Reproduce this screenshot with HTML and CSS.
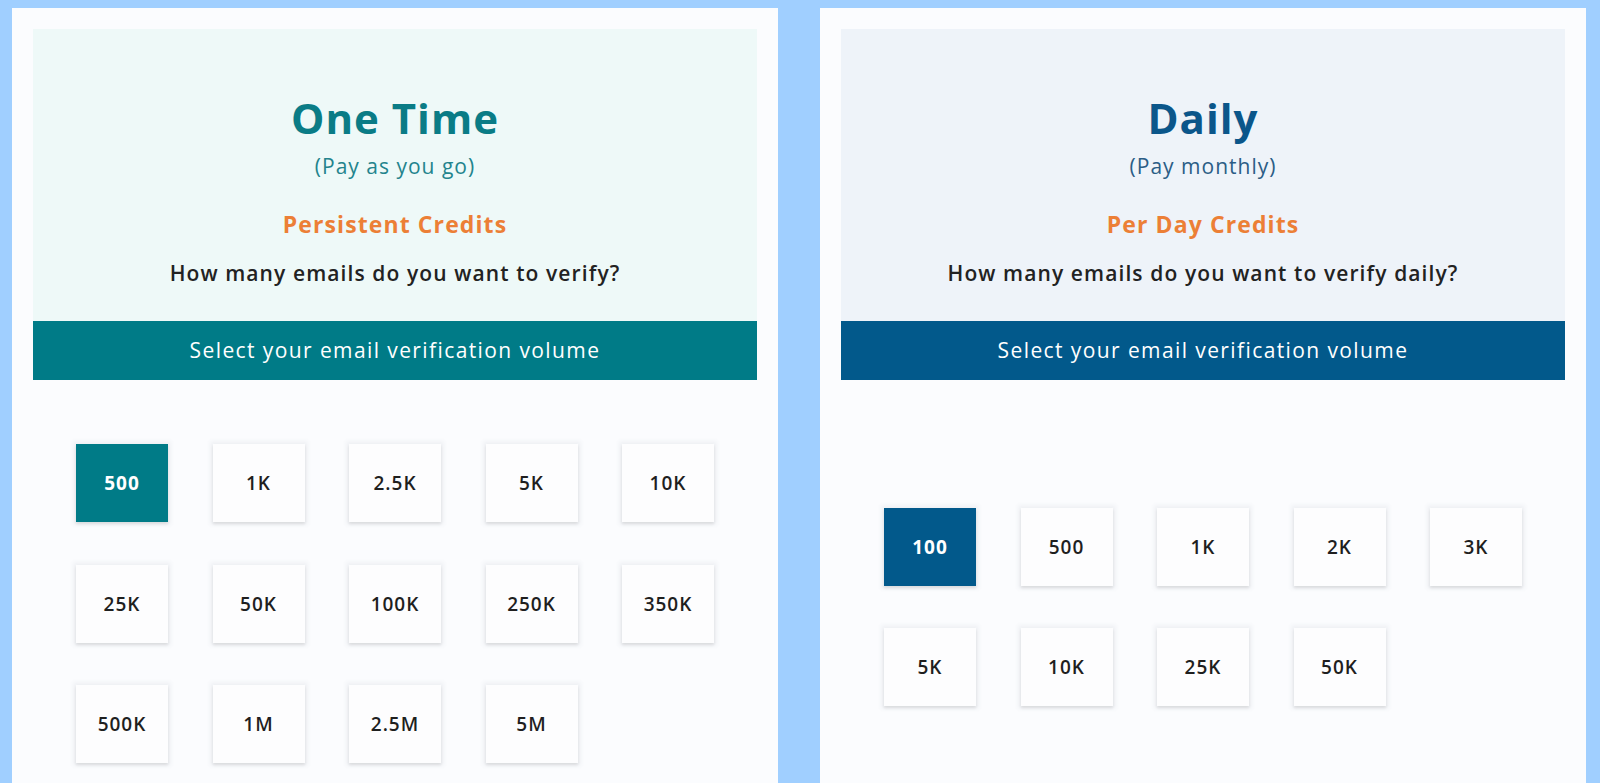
FILE: index.html
```html
<!DOCTYPE html>
<html lang="en">
<head>
<meta charset="utf-8">
<title>Email verification plans</title>
<link rel="stylesheet" href="styles.css">
</head>
<body>
<main class="plans">
  <section class="plan plan-onetime">
    <header class="plan-head">
      <h1 class="plan-title">One Time</h1>
      <p class="plan-sub">(Pay as you go)</p>
      <p class="plan-credits">Persistent Credits</p>
      <p class="plan-question">How many emails do you want to verify?</p>
    </header>
    <div class="plan-bar">Select your email verification volume</div>
    <div class="plan-body">
      <div class="vol-grid">
        <button class="vol is-active">500</button>
        <button class="vol">1K</button>
        <button class="vol">2.5K</button>
        <button class="vol">5K</button>
        <button class="vol">10K</button>
        <button class="vol">25K</button>
        <button class="vol">50K</button>
        <button class="vol">100K</button>
        <button class="vol">250K</button>
        <button class="vol">350K</button>
        <button class="vol">500K</button>
        <button class="vol">1M</button>
        <button class="vol">2.5M</button>
        <button class="vol">5M</button>
      </div>
    </div>
  </section>
  <section class="plan plan-daily">
    <header class="plan-head">
      <h1 class="plan-title">Daily</h1>
      <p class="plan-sub">(Pay monthly)</p>
      <p class="plan-credits">Per Day Credits</p>
      <p class="plan-question">How many emails do you want to verify daily?</p>
    </header>
    <div class="plan-bar">Select your email verification volume</div>
    <div class="plan-body">
      <div class="vol-grid">
        <button class="vol is-active">100</button>
        <button class="vol">500</button>
        <button class="vol">1K</button>
        <button class="vol">2K</button>
        <button class="vol">3K</button>
        <button class="vol">5K</button>
        <button class="vol">10K</button>
        <button class="vol">25K</button>
        <button class="vol">50K</button>
      </div>
    </div>
  </section>
</main>
</body>
</html>
```

FILE: styles.css
```css
* { box-sizing: border-box; }

html, body {
  margin: 0;
  padding: 0;
  height: 100%;
  overflow: hidden;
}

body {
  background: #a0cfff;
  font-family: "Open Sans", "Liberation Sans", sans-serif;
  color: #1f1f1f;
}

.plans {
  display: flex;
  align-items: stretch;
  gap: 42px;
  padding: 8px 14px 0 12px;
}

.plan {
  flex: 0 0 766px;
  background: #fbfcfe;
  padding: 21px 21px 0;
  display: flex;
  flex-direction: column;
}

.plan-head {
  height: 292px;
  padding-top: 63px;
  text-align: center;
}

.plan-onetime .plan-head { background: #eef9f8; }
.plan-daily .plan-head { background: #eef3f9; }

.plan-title {
  margin: 0;
  font-size: 42px;
  line-height: 52px;
  font-weight: 700;
  letter-spacing: 1px;
}

.plan-onetime .plan-title { color: #0a7c86; }
.plan-daily .plan-title { color: #0b568a; }

.plan-sub {
  margin: 9px 0 0;
  font-size: 21px;
  line-height: 26px;
  letter-spacing: 1px;
}

.plan-onetime .plan-sub { color: #23848d; }
.plan-daily .plan-sub { color: #2b5d86; }

.plan-credits {
  margin: 31px 0 0;
  font-size: 23px;
  line-height: 28px;
  font-weight: 700;
  color: #ec7f36;
  letter-spacing: 1.1px;
}

.plan-question {
  margin: 21px 0 0;
  font-size: 21px;
  line-height: 28px;
  font-weight: 600;
  color: #222;
  letter-spacing: 1.1px;
}

.plan-bar {
  height: 59px;
  line-height: 58px;
  text-align: center;
  color: #fff;
  font-size: 21px;
  letter-spacing: 1.4px;
}

.plan-onetime .plan-bar { background: #007b87; }
.plan-daily .plan-bar { background: #02598b; }

.plan-body {
  flex: 1;
  display: flex;
  flex-direction: column;
  justify-content: center;
  padding: 64px 0 64px;
}

.vol-grid {
  display: grid;
  grid-template-columns: repeat(5, 92px);
  grid-auto-rows: 78px;
  column-gap: 44.5px;
  row-gap: 42.5px;
  justify-content: center;
}

.plan-daily .vol-grid { margin-top: 7px; }

.vol {
  border: 0;
  margin: 0;
  padding: 0;
  background: #fdfdfe;
  font-family: inherit;
  font-size: 19px;
  font-weight: 600;
  letter-spacing: 1px;
  color: #1f1f1f;
  box-shadow: 0 2px 3px rgba(0, 0, 0, 0.10), 0 0 4px 3px rgba(60, 80, 110, 0.06);
  cursor: pointer;
}

.plan-onetime .vol.is-active { background: #007b87; color: #fff; font-weight: 700; }
.plan-daily .vol.is-active { background: #02598b; color: #fff; font-weight: 700; }
```
